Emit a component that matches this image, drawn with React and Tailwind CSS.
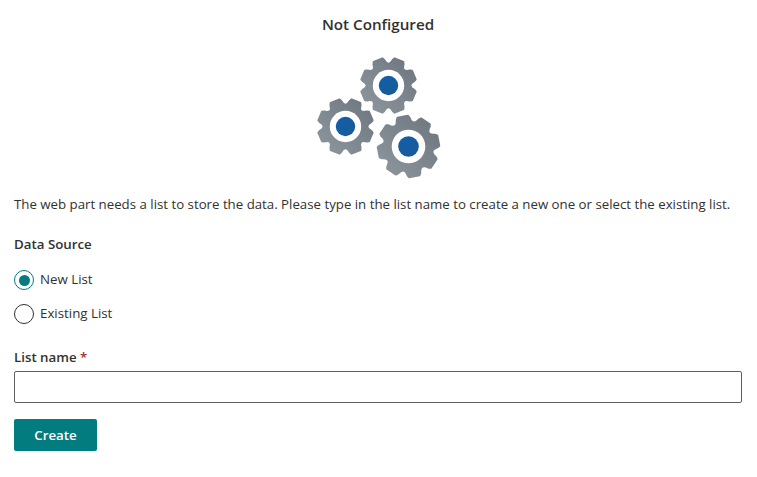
import React from 'react';

const font = "font-['Open_Sans','Noto_Sans',sans-serif]";

// scalloped gear: flat tooth tops with a rounded scoop between each tooth
const gearPath = (cx, cy, outer, inner, teeth, rot) => {
  const step = (Math.PI * 2) / teeth;
  const pt = (r, a) => `${(cx + r * Math.cos(a)).toFixed(2)} ${(cy + r * Math.sin(a)).toFixed(2)}`;
  let d = '';
  for (let i = 0; i < teeth; i++) {
    const a = rot + i * step;
    const top = step * 0.22;
    const foot = step * 0.29;
    const mid = inner + (outer - inner) * 0.55;
    d += `${i === 0 ? 'M' : 'L'}${pt(outer, a - top)} `;
    d += `L${pt(outer, a + top)} `;
    d += `L${pt(mid, a + foot)} `;
    d += `Q${pt(inner * 0.76, a + step / 2)} ${pt(mid, a + step - foot)} `;
  }
  return d + 'Z';
};

const Gear = ({ cx, cy, outer, inner, ring, dot, rot }) => (
  <g>
    <path
      d={gearPath(cx, cy, outer, inner, 8, rot)}
      fill="url(#gearBody)"
      stroke="url(#gearBody)"
      strokeWidth="1.6"
      strokeLinejoin="round"
    />
    <circle cx={cx} cy={cy} r={ring} fill="#ffffff" />
    <circle cx={cx} cy={cy} r={dot} fill="url(#gearDot)" />
  </g>
);

const Gears = () => (
  <svg viewBox="0 0 130 130" className="w-[130px] h-[130px] block">
    <defs>
      <linearGradient id="gearBody" x1="0" y1="1" x2="1" y2="0">
        <stop offset="0%" stopColor="#8f989f" />
        <stop offset="100%" stopColor="#6c757d" />
      </linearGradient>
      <linearGradient id="gearDot" x1="0" y1="0" x2="1" y2="1">
        <stop offset="0%" stopColor="#0f5fae" />
        <stop offset="100%" stopColor="#1b5a92" />
      </linearGradient>
    </defs>
    <Gear cx={74.5} cy={33.5} outer={28} inner={24} ring={15.7} dot={9.7} rot={Math.PI / 8} />
    <Gear cx={31.5} cy={74.5} outer={28} inner={24} ring={15.7} dot={9.7} rot={Math.PI / 8} />
    <Gear cx={94.5} cy={94.5} outer={31} inner={27} ring={16.8} dot={10.3} rot={Math.PI / 8 + 0.2} />
  </svg>
);

export default function App() {
  return (
    <div className={`w-[757px] h-[477px] bg-white px-[14px] pt-[13px] text-[#323130] ${font}`}>
      <h2 className="text-[15.2px] leading-[22px] font-semibold text-center -translate-x-[0.5px]">Not Configured</h2>
      <div className="flex justify-center mt-[17px]">
        <Gears />
      </div>
      <p className="mt-[12px] text-[13.25px] leading-[20px] whitespace-nowrap">
        The web part needs a list to store the data. Please type in the list name to create a new one or select the existing list.
      </p>
      <div className="mt-[20px] text-[13.3px] leading-[20px] font-semibold">Data Source</div>
      <div className="mt-[16px] flex flex-col gap-[14px]">
        <label className="flex items-center gap-[6px] h-[20px] text-[13.3px]">
          <span className="w-[20px] h-[20px] rounded-full border border-[#037c80] flex items-center justify-center">
            <span className="w-[11px] h-[11px] rounded-full bg-[#037c80]" />
          </span>
          New List
        </label>
        <label className="flex items-center gap-[6px] h-[20px] text-[13.3px]">
          <span className="w-[20px] h-[20px] rounded-full border border-[#323130]" />
          Existing List
        </label>
      </div>
      <div className="mt-[23px] text-[13.3px] leading-[20px] font-semibold">
        List name <span className="text-[#a4262c]">*</span>
      </div>
      <input type="text" className="mt-[4px] block w-[728px] h-[32px] border border-[#605e5c] rounded-[2px] bg-white" />
      <button className="mt-[16px] block w-[83px] h-[32px] pt-[1px] bg-[#037c80] rounded-[2px] text-white text-[13.3px] font-semibold">
        Create
      </button>
    </div>
  );
}
